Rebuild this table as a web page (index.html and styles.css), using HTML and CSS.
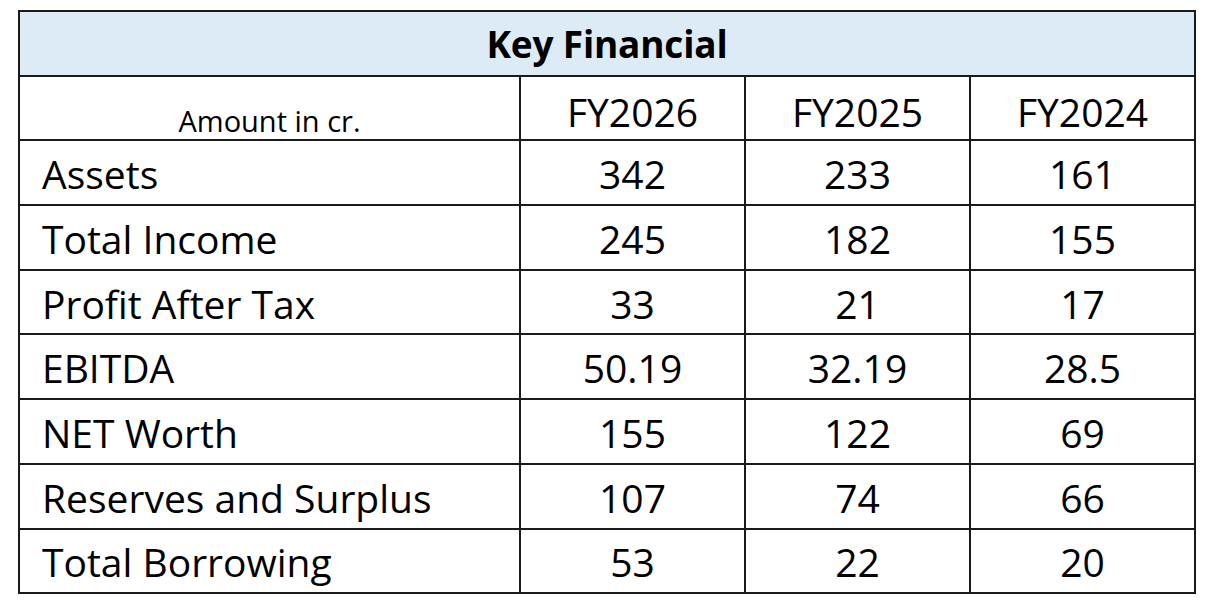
FILE: index.html
```html
<!DOCTYPE html>
<html lang="en">
<head>
<meta charset="utf-8">
<title>Key Financial</title>
<link rel="stylesheet" href="styles.css">
</head>
<body>
<table class="fin">
  <colgroup>
    <col class="c-label">
    <col class="c-year">
    <col class="c-year">
    <col class="c-year">
  </colgroup>
  <thead>
    <tr class="title-row"><th colspan="4" class="title">Key Financial</th></tr>
    <tr class="year-row">
      <th class="unit">Amount in cr.</th>
      <th class="year">FY2026</th>
      <th class="year">FY2025</th>
      <th class="year">FY2024</th>
    </tr>
  </thead>
  <tbody>
    <tr><td class="label">Assets</td><td class="num">342</td><td class="num">233</td><td class="num">161</td></tr>
    <tr><td class="label">Total Income</td><td class="num">245</td><td class="num">182</td><td class="num">155</td></tr>
    <tr><td class="label">Profit After Tax</td><td class="num">33</td><td class="num">21</td><td class="num">17</td></tr>
    <tr><td class="label">EBITDA</td><td class="num">50.19</td><td class="num">32.19</td><td class="num">28.5</td></tr>
    <tr><td class="label">NET Worth</td><td class="num">155</td><td class="num">122</td><td class="num">69</td></tr>
    <tr><td class="label">Reserves and Surplus</td><td class="num">107</td><td class="num">74</td><td class="num">66</td></tr>
    <tr><td class="label">Total Borrowing</td><td class="num">53</td><td class="num">22</td><td class="num">20</td></tr>
  </tbody>
</table>
</body>
</html>
```

FILE: styles.css
```css
html, body {
  margin: 0;
  padding: 0;
  background: #ffffff;
}

body {
  padding: 10px 0 0 18px;
  font-family: "Open Sans", "Noto Sans", sans-serif;
  color: #000;
}

.fin {
  border-collapse: collapse;
  table-layout: fixed;
  width: 1177px;
  border: 2px solid #1a1a1a;
}

.c-label { width: 501px; }
.c-year { width: 225px; }

.fin th,
.fin td {
  border: 2px solid #1a1a1a;
  height: 64.7px;
  padding: 0;
  box-sizing: border-box;
  line-height: 1;
  font-weight: 400;
}

.title-row th {
  background: #ddebf7;
  font-weight: 700;
  font-size: 37px;
  letter-spacing: -0.2px;
  text-align: center;
  vertical-align: middle;
  padding-top: 1px;
}

.unit {
  font-size: 29px;
  text-align: center;
  vertical-align: bottom;
  padding-bottom: 4px !important;
}

.year {
  font-size: 39px;
  text-align: center;
  vertical-align: middle;
  padding-top: 6px !important;
}

.label {
  font-size: 39px;
  text-align: left;
  vertical-align: middle;
  padding-left: 22px !important;
  padding-top: 2px !important;
}

.num {
  font-size: 39px;
  text-align: center;
  vertical-align: middle;
  padding-top: 2px !important;
}
```
